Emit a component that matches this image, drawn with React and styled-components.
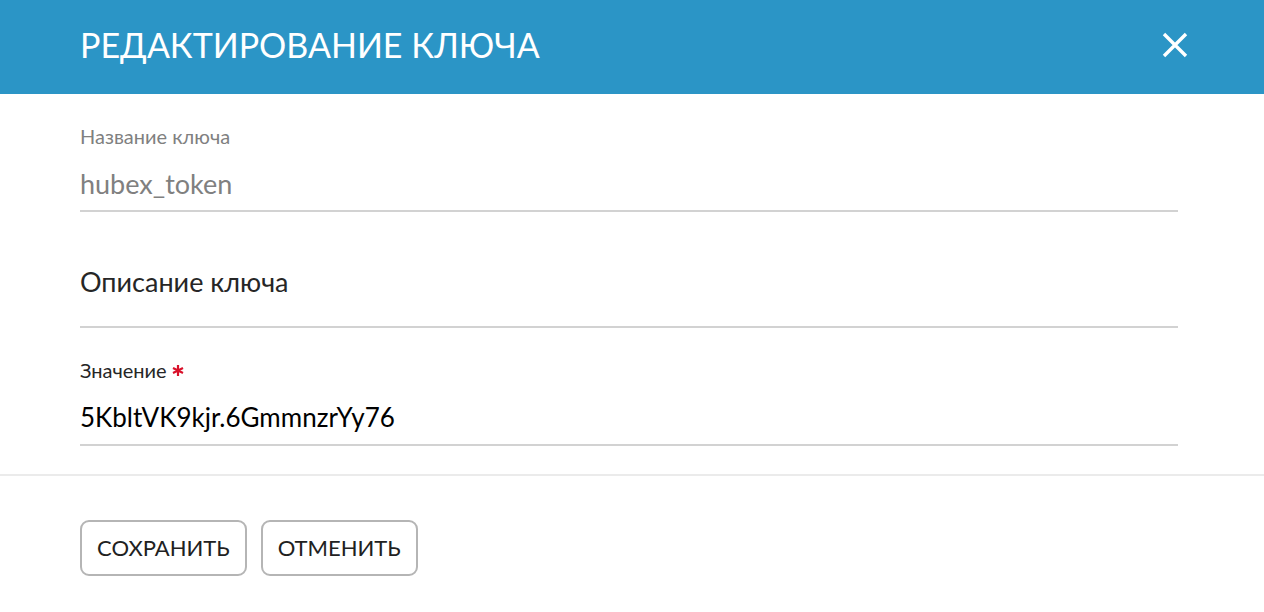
import React, { useState } from "react";
import styled, { createGlobalStyle } from "styled-components";

const GlobalStyle = createGlobalStyle`
  *, *::before, *::after { box-sizing: border-box; }
  body {
    margin: 0;
    background: #fff;
    color: #212121;
    font-family: Lato, "Noto Sans", "Liberation Sans", sans-serif;
  }
`;

const Dialog = styled.form`
  display: flex;
  flex-direction: column;
`;

const Header = styled.header`
  display: flex;
  align-items: center;
  justify-content: space-between;
  padding: 20px 68px 24px 80px;
  background: #2b95c6;
  color: #fff;
`;

const Title = styled.h1`
  margin: 0;
  font-size: 34px;
  line-height: 50px;
  font-weight: 400;
  text-transform: uppercase;
`;

const CloseButton = styled.button`
  display: flex;
  padding: 8px;
  border: 0;
  background: none;
  color: inherit;
  cursor: pointer;
`;

const Fields = styled.div`
  display: flex;
  flex-direction: column;
  gap: 28px;
  padding: 28px 86px 28px 80px;
  border-bottom: 2px solid #ebebeb;
`;

const Field = styled.div`
  display: flex;
  flex-direction: column;
  gap: 2px;
`;

const Label = styled.label`
  display: flex;
  align-items: center;
  gap: 5px;
  font-size: 20px;
  line-height: 28px;
  color: ${(p) => (p.$muted ? "#808080" : "#262626")};
`;

const TextInput = styled.input`
  width: 100%;
  height: ${(p) => (p.$tall ? "88px" : "60px")};
  padding: ${(p) => (p.$tall ? "0 0 2px" : "4px 0 0")};
  border: 0;
  border-bottom: 2px solid #d2d2d2;
  border-radius: 0;
  outline: 0;
  background: none;
  font: inherit;
  font-size: 26px;
  color: #000;
  &:disabled { font-size: 27px; color: #808080; }
  &::placeholder { font-size: 27px; color: #262626; opacity: 1; }
`;

const Actions = styled.footer`
  display: flex;
  gap: 14px;
  padding: 44px 80px 36px;
`;

const ActionButton = styled.button`
  height: 56px;
  padding: 0 15px 2px;
  border: 2px solid #b5b5b5;
  border-radius: 9px;
  background: #fff;
  color: #212121;
  font: inherit;
  font-size: 22px;
  text-transform: uppercase;
  cursor: pointer;
`;

export default function App() {
  const [description, setDescription] = useState("");
  const [value, setValue] = useState("5KbltVK9kjr.6GmmnzrYy76");
  return (
    <Dialog onSubmit={(e) => e.preventDefault()}>
      <GlobalStyle />
      <Header>
        <Title>Редактирование ключа</Title>
        <CloseButton type="button" aria-label="Закрыть">
          <svg width="26" height="26" viewBox="0 0 26 26" stroke="currentColor" strokeWidth="3.4">
            <path d="M2 2 24 24M24 2 2 24" />
          </svg>
        </CloseButton>
      </Header>
      <Fields>
        <Field>
          <Label htmlFor="name" $muted>Название ключа</Label>
          <TextInput id="name" value="hubex_token" disabled />
        </Field>
        <TextInput $tall aria-label="Описание ключа" placeholder="Описание ключа" value={description} onChange={(e) => setDescription(e.target.value)} />
        <Field>
          <Label htmlFor="value">
            Значение
            <svg width="12" height="12" viewBox="0 0 12 12" stroke="#d9112a" strokeWidth="2.2" aria-hidden="true">
              <path d="M6 1V12M1 4 11 9M11 4 1 9" />
            </svg>
          </Label>
          <TextInput id="value" required value={value} onChange={(e) => setValue(e.target.value)} />
        </Field>
      </Fields>
      <Actions>
        <ActionButton type="submit">Сохранить</ActionButton>
        <ActionButton type="button">Отменить</ActionButton>
      </Actions>
    </Dialog>
  );
}
